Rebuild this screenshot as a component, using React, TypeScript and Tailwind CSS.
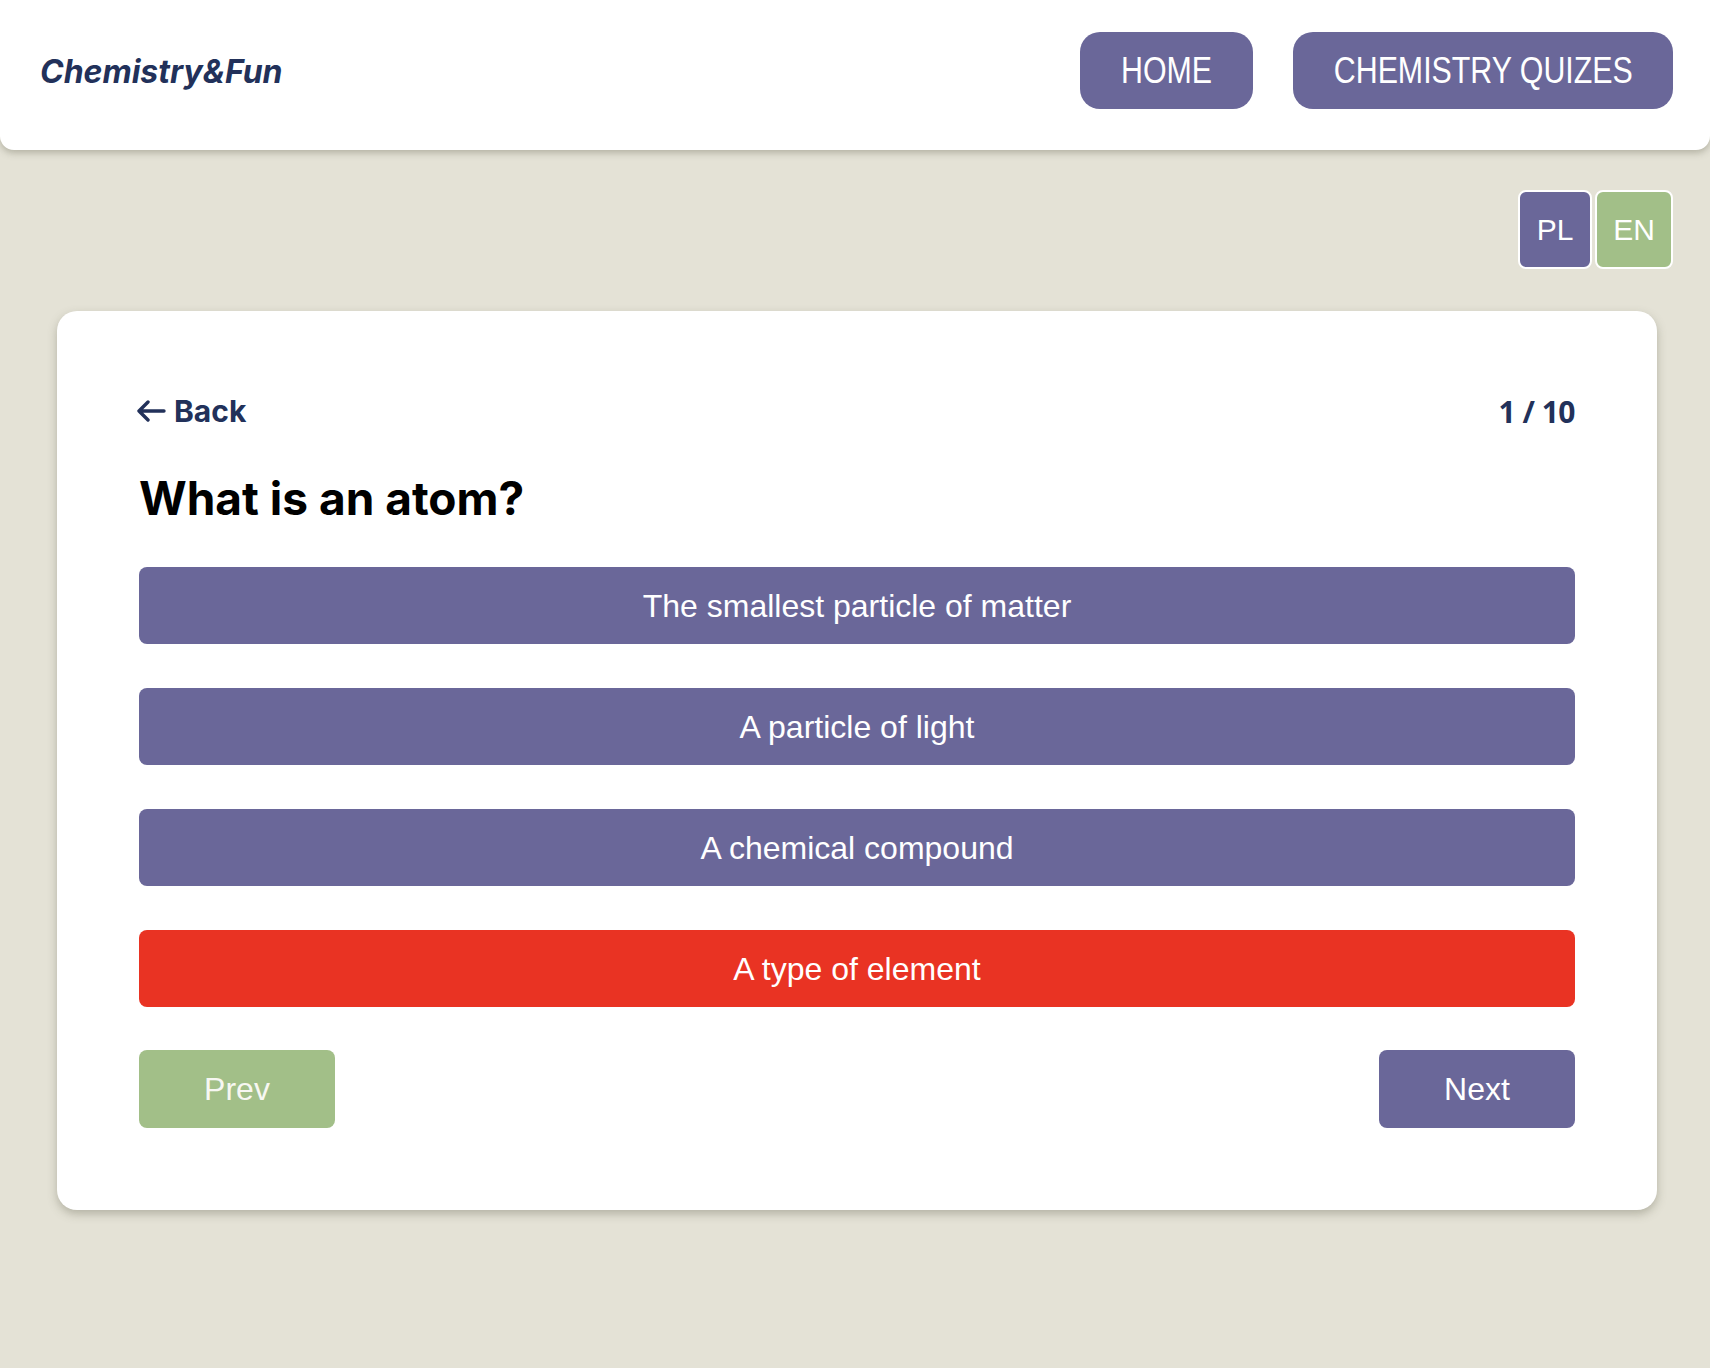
import { useState } from "react";

const answers = [
  "The smallest particle of matter",
  "A particle of light",
  "A chemical compound",
  "A type of element",
];

const navItems = [
  { label: "HOME", width: "w-[173px]" },
  { label: "CHEMISTRY QUIZES", width: "w-[380px]" },
];

function BackArrow() {
  return (
    <svg width="30" height="22" viewBox="0 0 30 22" fill="none">
      <path
        d="M28 11H3M12 2L3 11L12 20"
        stroke="currentColor"
        strokeWidth="3.4"
        strokeLinecap="round"
        strokeLinejoin="round"
      />
    </svg>
  );
}

export default function App() {
  const [lang, setLang] = useState<"PL" | "EN">("EN");
  const [picked] = useState(3);

  return (
    <div className="min-h-[1368px] bg-[#e4e2d6] font-['Liberation_Sans',Arial,sans-serif]">
      <header className="flex h-[150px] items-start justify-between rounded-b-[14px] bg-white pl-[40px] pr-[37px] pt-[32px] shadow-[0_3px_7px_rgba(90,88,70,0.35)]">
        <div className="flex h-[77px] items-center pt-[2px] font-['Inter',sans-serif] text-[32px] font-bold italic text-[#22315a]">
          Chemistry&amp;Fun
        </div>
        <nav className="flex gap-[40px]">
          {navItems.map((item) => (
            <button
              key={item.label}
              className={`flex h-[77px] items-center justify-center rounded-[20px] bg-[#6a6799] text-[37px] text-white ${item.width}`}
            >
              <span className="inline-block scale-x-[0.82] whitespace-nowrap">
                {item.label}
              </span>
            </button>
          ))}
        </nav>
      </header>

      <div className="flex justify-end pr-[37px] pt-[40px]">
        <button
          onClick={() => setLang("PL")}
          className="flex h-[79px] w-[74px] items-center justify-center rounded-lg border-2 border-white bg-[#6a6799] text-[30px] text-white"
        >
          PL
        </button>
        <button
          onClick={() => setLang("EN")}
          className={`ml-[3px] flex h-[79px] w-[78px] items-center justify-center rounded-lg border-2 border-white text-[30px] text-white ${
            lang === "EN" ? "bg-[#a2bf88]" : "bg-[#a2bf88]"
          }`}
        >
          EN
        </button>
      </div>

      <main className="ml-[57px] mt-[42px] w-[1600px] rounded-[20px] bg-white px-[82px] pb-[82px] pt-20 shadow-[0_4px_10px_rgba(90,88,70,0.35)]">
        <div className="flex h-10 items-center justify-between">
          <button className="-ml-[3px] flex items-center gap-[8px] font-['Inter',sans-serif] text-[30px] font-bold text-[#22315a]">
            <BackArrow />
            Back
          </button>
          <span className="font-['Open_Sans',sans-serif] text-[30px] font-bold tracking-[-0.5px] text-[#22315a]">
            1 / 10
          </span>
        </div>

        <h1 className="mt-[40px] font-['Inter',sans-serif] text-[46px] font-bold leading-[55px] text-black">
          What is an atom?
        </h1>

        <div className="mt-[41px] flex flex-col gap-[44px]">
          {answers.map((a, i) => (
            <button
              key={a}
              className={`h-[77px] w-full rounded-lg text-[32px] text-white ${
                i === picked ? "bg-[#e93323]" : "bg-[#6a6799]"
              }`}
            >
              {a}
            </button>
          ))}
        </div>

        <div className="mt-[43px] flex justify-between">
          <button className="h-[78px] w-[196px] rounded-lg bg-[#a2bf88] text-[32px] text-[#f7f7f2]">
            Prev
          </button>
          <button className="h-[78px] w-[196px] rounded-lg bg-[#6a6799] text-[32px] text-white">
            Next
          </button>
        </div>
      </main>
    </div>
  );
}
